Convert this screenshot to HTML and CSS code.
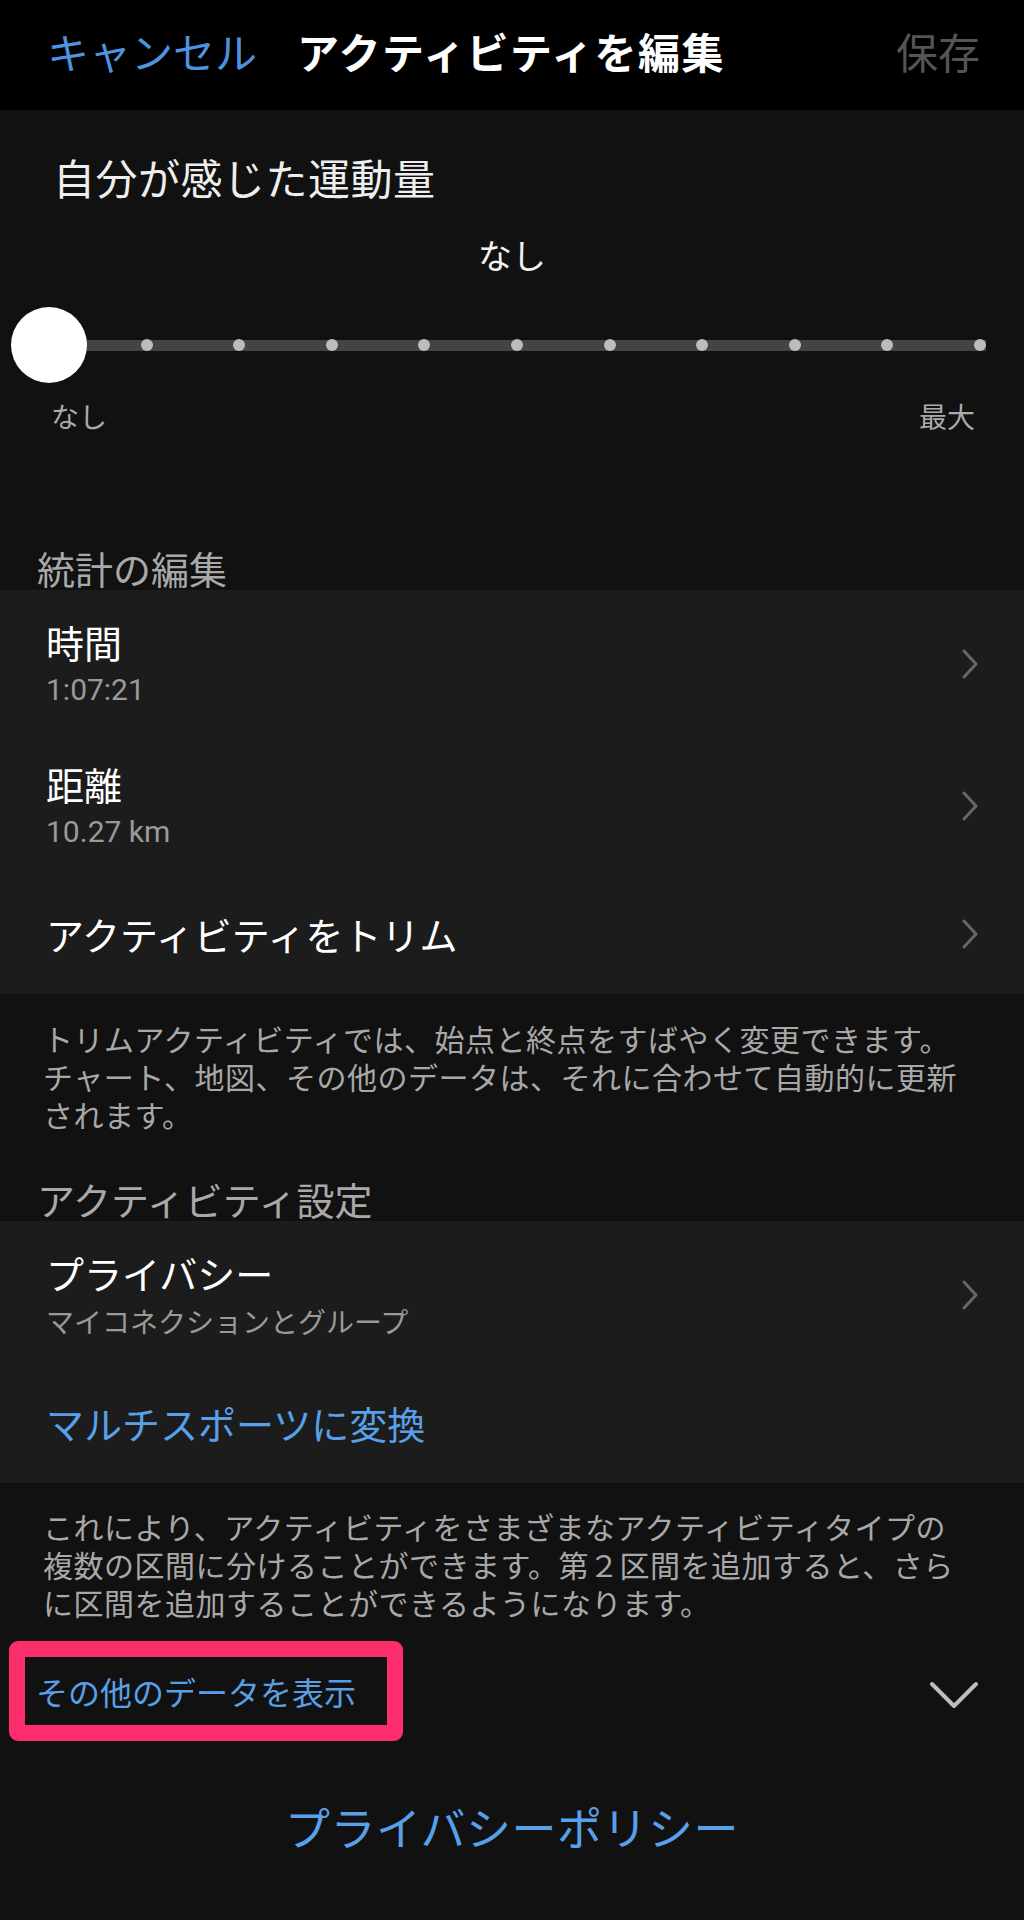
FILE: index.html
```html
<!DOCTYPE html>
<html lang="ja">
<head>
<meta charset="utf-8">
<title>アクティビティを編集</title>
<link rel="stylesheet" href="styles.css">
</head>
<body>
<div class="screen">
  <header class="topbar">
    <span class="cancel">キャンセル</span>
    <span class="title">アクティビティを編集</span>
    <span class="save">保存</span>
  </header>

  <section class="effort">
    <div class="effort-title">自分が感じた運動量</div>
    <div class="effort-value">なし</div>
    <div class="slider">
      <div class="track">
        <span class="dot"></span><span class="dot"></span><span class="dot"></span><span class="dot"></span>
        <span class="dot"></span><span class="dot"></span><span class="dot"></span><span class="dot"></span>
        <span class="dot"></span><span class="dot"></span><span class="dot"></span>
      </div>
      <div class="thumb"></div>
    </div>
    <div class="slider-labels"><span>なし</span><span>最大</span></div>
  </section>

  <div class="section-header first">統計の編集</div>
  <div class="card">
    <div class="row two-line">
      <div class="row-text">
        <div class="row-title">時間</div>
        <div class="row-sub num">1:07:21</div>
      </div>
      <svg class="chev" viewBox="0 0 20 30" width="20" height="30"><polyline points="4,2 16,15 4,28" fill="none" stroke="#676767" stroke-width="3" stroke-linecap="round" stroke-linejoin="round"/></svg>
    </div>
    <div class="row two-line">
      <div class="row-text">
        <div class="row-title">距離</div>
        <div class="row-sub num">10.27 km</div>
      </div>
      <svg class="chev" viewBox="0 0 20 30" width="20" height="30"><polyline points="4,2 16,15 4,28" fill="none" stroke="#676767" stroke-width="3" stroke-linecap="round" stroke-linejoin="round"/></svg>
    </div>
    <div class="row one-line">
      <div class="row-title">アクティビティをトリム</div>
      <svg class="chev" viewBox="0 0 20 30" width="20" height="30"><polyline points="4,2 16,15 4,28" fill="none" stroke="#676767" stroke-width="3" stroke-linecap="round" stroke-linejoin="round"/></svg>
    </div>
  </div>
  <p class="note note-trim">トリムアクティビティでは、始点と終点をすばやく変更できます。チャート、地図、その他のデータは、それに合わせて自動的に更新されます。</p>

  <div class="section-header">アクティビティ設定</div>
  <div class="card">
    <div class="row two-line">
      <div class="row-text">
        <div class="row-title">プライバシー</div>
        <div class="row-sub">マイコネクションとグループ</div>
      </div>
      <svg class="chev" viewBox="0 0 20 30" width="20" height="30"><polyline points="4,2 16,15 4,28" fill="none" stroke="#676767" stroke-width="3" stroke-linecap="round" stroke-linejoin="round"/></svg>
    </div>
    <div class="row one-line">
      <div class="row-title link">マルチスポーツに変換</div>
    </div>
  </div>
  <p class="note note-multi">これにより、アクティビティをさまざまなアクティビティタイプの複数の区間に分けることができます。第２区間を追加すると、さらに区間を追加することができるようになります。</p>

  <div class="more-row">
    <span class="more-link">その他のデータを表示</span>
    <svg class="chev-down" viewBox="0 0 50 28" width="50" height="28"><polyline points="3,3 25,25 47,3" fill="none" stroke="#bdbdbd" stroke-width="4" stroke-linecap="round" stroke-linejoin="round"/></svg>
  </div>

  <div class="policy">プライバシーポリシー</div>
</div>
</body>
</html>
```

FILE: styles.css
```css
* { box-sizing: border-box; }
html, body { margin: 0; padding: 0; }
body {
  background: #111111;
  font-family: "Noto Sans CJK JP", "Noto Sans", sans-serif;
  color: #fff;
}
.screen {
  width: 1024px;
  min-height: 1920px;
  background: #111111;
}

/* Top bar */
.topbar {
  height: 110px;
  background: #000;
  display: flex;
  align-items: center;
  padding: 0 44px 8px 47px;
  font-size: 42px;
  line-height: 50px;
}
.cancel { color: #4f92df; }
.title { color: #fff; font-weight: 700; margin-left: 40px; letter-spacing: 1.5px; }
.save { color: #555; margin-left: auto; }

/* Effort */
.effort { padding-top: 42px; }
.effort-title {
  font-size: 42px;
  line-height: 50px;
  color: #eee;
  padding-left: 53px;
  letter-spacing: 0.5px;
}
.effort-value {
  margin-top: 33px;
  font-size: 34px;
  line-height: 40px;
  color: #f2f2f2;
  text-align: center;
}
.slider {
  position: relative;
  margin-top: 32px;
  height: 76px;
  display: flex;
  align-items: center;
  padding: 0 38px 0 48px;
}
.track {
  flex: 1;
  height: 11px;
  background: #444;
  display: flex;
  justify-content: space-between;
  align-items: center;
}
.dot {
  width: 12px;
  height: 12px;
  border-radius: 50%;
  background: #bcbcbc;
}
.thumb {
  position: absolute;
  left: 11px;
  top: 0;
  width: 76px;
  height: 76px;
  border-radius: 50%;
  background: #fff;
}
.slider-labels {
  margin-top: 16px;
  display: flex;
  justify-content: space-between;
  padding: 0 49px 0 51px;
  font-size: 28px;
  line-height: 34px;
  color: #aaa;
}

/* Sections */
.section-header {
  font-size: 38px;
  line-height: 44px;
  color: #a9a9a9;
  padding-left: 37px;
}
.section-header.first { margin-top: 113px; }

.card { background: #1c1c1c; }
.row {
  display: flex;
  align-items: center;
  justify-content: space-between;
  padding: 0 46px;
}
.row.two-line { padding-top: 30px; padding-bottom: 25px; }
.row.one-line { height: 120px; }
.row-title {
  font-size: 38px;
  line-height: 44px;
  color: #fff;
}
.row-title.link { color: #58a0ea; }
.row-sub {
  margin-top: 9px;
  font-size: 28px;
  line-height: 34px;
  color: #999;
}
.row-sub.num {
  font-family: Roboto, "Noto Sans", sans-serif;
  font-size: 30px;
  color: #9a9a9a;
}
.chev { flex: none; margin-right: -2px; }

.note {
  margin: 0;
  font-size: 30px;
  letter-spacing: 0.5px;
  line-height: 38px;
  color: #a8a8a8;
  padding: 25px 51px 44px 43px;
}
.note-multi { padding: 24px 51px 20px 43px; }

/* More data row */
.more-row {
  height: 100px;
  display: flex;
  align-items: center;
  justify-content: space-between;
  padding: 0 45px 0 9px;
}
.more-link {
  border: 16px solid #fb2d6c;
  border-radius: 9px;
  height: 100px;
  padding: 0 31px 0 11px;
  font-size: 32px;
  line-height: 68px;
  color: #5a9fe6;
}
.chev-down { flex: none; margin-top: 8px; }

.policy {
  margin-top: 60px;
  text-align: center;
  font-size: 45px;
  letter-spacing: 0.5px;
  line-height: 52px;
  color: #58a0ea;
}
```
